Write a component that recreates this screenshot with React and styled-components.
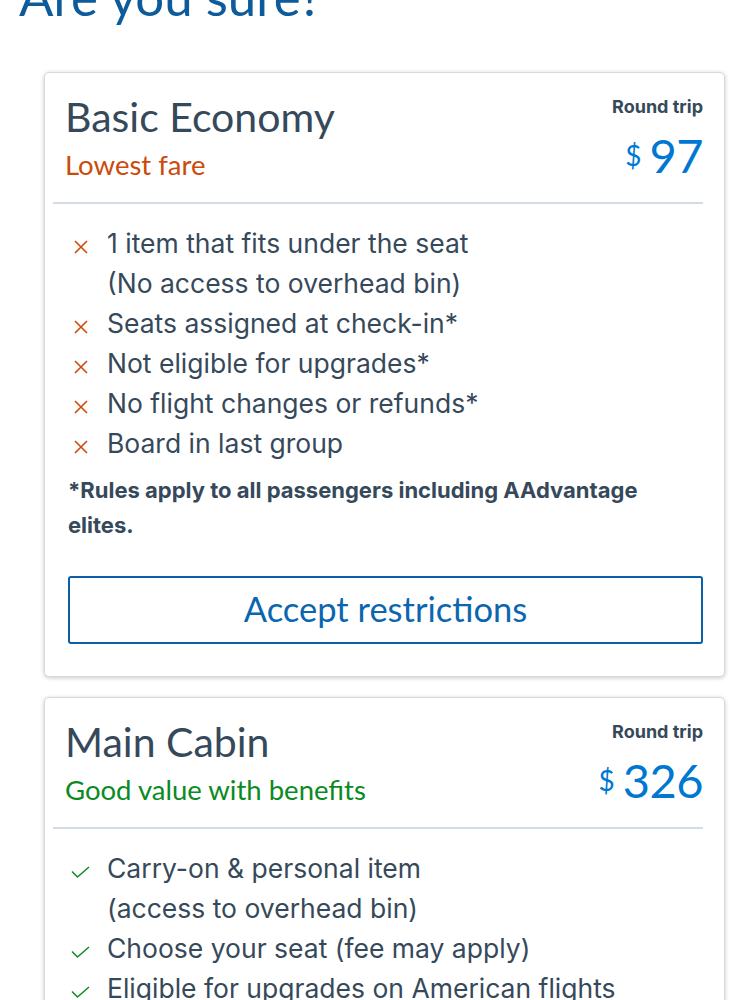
import React from 'react';
import styled, { createGlobalStyle } from 'styled-components';

const GlobalStyle = createGlobalStyle`
  html, body {
    margin: 0;
    padding: 0;
    background: #ffffff;
  }
  body {
    font-family: Inter, "Open Sans", sans-serif;
    color: #36495a;
    overflow: hidden;
  }
`;

const Page = styled.div`
  width: 750px;
  height: 1000px;
  overflow: hidden;
`;

const Heading = styled.h1`
  margin: -33px 0 0 0;
  padding-left: 19px;
  font-family: Lato, sans-serif;
  font-size: 51px;
  font-weight: 400;
  line-height: 60px;
  color: #0d5b9b;
`;

const CardList = styled.div`
  display: flex;
  flex-direction: column;
  gap: 20px;
  margin: 45px 0 0 44px;
  width: 681px;
`;

const Card = styled.section`
  background: #fff;
  border: 1px solid #d9d9d9;
  border-radius: 5px;
  box-shadow: 0 1px 4px rgba(0, 0, 0, 0.22);
  padding: 0 21px 32px 8px;
`;

const Header = styled.div`
  display: flex;
  justify-content: space-between;
  padding: 19px 0 19px 12px;
  border-bottom: 2px solid #d3dce4;
`;

const TitleBlock = styled.div`
  display: flex;
  flex-direction: column;
`;

const Title = styled.h2`
  margin: 0;
  font-family: Lato, sans-serif;
  font-size: 41px;
  font-weight: 400;
  line-height: 50px;
  color: #36495a;
`;

const Tagline = styled.div`
  margin-top: 5px;
  font-family: Lato, sans-serif;
  font-size: 27.5px;
  line-height: 36px;
  color: ${p => p.$tone};
`;

const PriceBlock = styled.div`
  display: flex;
  flex-direction: column;
  align-items: flex-end;
  padding-top: 3px;
`;

const Trip = styled.div`
  font-size: 18px;
  font-weight: 700;
  line-height: 24px;
  color: #36495a;
`;

const Price = styled.div`
  display: flex;
  align-items: center;
  gap: 8px;
  margin-top: 11px;
  font-family: Lato, sans-serif;
  color: #0078d2;
`;

const Dollar = styled.span`
  font-size: 28px;
  line-height: 1;
`;

const Amount = styled.span`
  font-size: 47px;
  line-height: 50px;
  letter-spacing: -0.5px;
`;

const Body = styled.div`
  padding: 19px 0 0 15px;
`;

const Features = styled.ul`
  list-style: none;
  margin: 0;
  padding: 0;
`;

const Feature = styled.li`
  display: flex;
  align-items: flex-start;
  font-size: 26.5px;
  line-height: 40px;
  color: #36495a;
`;

const IconBox = styled.span`
  flex: 0 0 39px;
  height: 40px;
  display: flex;
  align-items: center;
  padding: 7px 0 0 ${p => p.$inset}px;
  box-sizing: border-box;
`;

const Note = styled.p`
  margin: 10px 0 0 0;
  font-size: 22px;
  font-weight: 700;
  line-height: 34.5px;
  color: #36495a;
`;

const AcceptButton = styled.button`
  display: block;
  width: 100%;
  height: 68px;
  margin-top: 34px;
  padding: 0 0 3px 0;
  background: #fff;
  border: 2px solid #0a5fa8;
  border-radius: 3px;
  font-family: Lato, sans-serif;
  font-size: 34.5px;
  color: #0b66b0;
  cursor: pointer;
`;

const Cross = ({ color }) => (
  <svg width="14" height="14" viewBox="0 0 14 14" fill="none">
    <path d="M1 1l12 12M13 1L1 13" stroke={color} strokeWidth="1.6" />
  </svg>
);

const Check = ({ color }) => (
  <svg width="19" height="12" viewBox="0 0 19 12" fill="none">
    <path d="M1 5.5l5.5 5.5L18 1" stroke={color} strokeWidth="1.5" strokeLinejoin="round" />
  </svg>
);

const ORANGE = '#cc4a0c';
const GREEN = '#0b8a1f';

const fares = [
  {
    name: 'Basic Economy',
    tagline: 'Lowest fare',
    tone: ORANGE,
    price: '97',
    kind: 'cross',
    items: [
      ['1 item that fits under the seat', '(No access to overhead bin)'],
      ['Seats assigned at check-in*'],
      ['Not eligible for upgrades*'],
      ['No flight changes or refunds*'],
      ['Board in last group'],
    ],
    note: '*Rules apply to all passengers including AAdvantage elites.',
    action: 'Accept restrictions',
  },
  {
    name: 'Main Cabin',
    tagline: 'Good value with benefits',
    tone: GREEN,
    price: '326',
    kind: 'check',
    items: [
      ['Carry-on & personal item', '(access to overhead bin)'],
      ['Choose your seat (fee may apply)'],
      ['Eligible for upgrades on American flights'],
    ],
  },
];

const FareCard = ({ fare }) => (
  <Card>
    <Header>
      <TitleBlock>
        <Title>{fare.name}</Title>
        <Tagline $tone={fare.tone}>{fare.tagline}</Tagline>
      </TitleBlock>
      <PriceBlock>
        <Trip>Round trip</Trip>
        <Price>
          <Dollar>$</Dollar>
          <Amount>{fare.price}</Amount>
        </Price>
      </PriceBlock>
    </Header>
    <Body>
      <Features>
        {fare.items.map((lines, i) => (
          <Feature key={i}>
            <IconBox $inset={fare.kind === 'cross' ? 6 : 3}>
              {fare.kind === 'cross' ? <Cross color={fare.tone} /> : <Check color={fare.tone} />}
            </IconBox>
            <div>
              {lines.map((l, j) => (
                <div key={j}>{l}</div>
              ))}
            </div>
          </Feature>
        ))}
      </Features>
      {fare.note && <Note>{fare.note}</Note>}
      {fare.action && <AcceptButton>{fare.action}</AcceptButton>}
    </Body>
  </Card>
);

export default function App() {
  return (
    <Page>
      <GlobalStyle />
      <Heading>Are you sure?</Heading>
      <CardList>
        {fares.map(f => (
          <FareCard key={f.name} fare={f} />
        ))}
      </CardList>
    </Page>
  );
}
